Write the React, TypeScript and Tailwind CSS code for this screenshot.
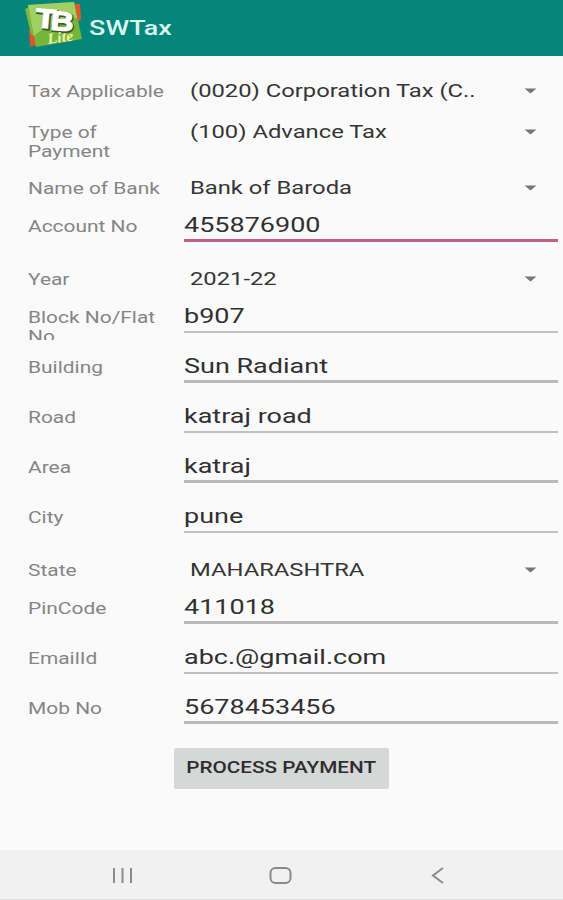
type LineStyle = "accent" | "thick" | "thin"

interface FieldRow {
  label: string
  value: string
  kind: "select" | "input"
  height: string
  line?: LineStyle
  clipLabel?: boolean
}

const rows: FieldRow[] = [
  { label: "Tax Applicable", value: "(0020) Corporation Tax (C..", kind: "select", height: "h-[41px]" },
  { label: "Type of Payment", value: "(100) Advance Tax", kind: "select", height: "h-14" },
  { label: "Name of Bank", value: "Bank of Baroda", kind: "select", height: "h-[38px]" },
  { label: "Account No", value: "455876900", kind: "input", height: "h-[53px]", line: "accent" },
  { label: "Year", value: "2021-22", kind: "select", height: "h-[38px]" },
  { label: "Block No/Flat No", value: "b907", kind: "input", height: "h-[50px]", line: "thin", clipLabel: true },
  { label: "Building", value: "Sun Radiant", kind: "input", height: "h-[50px]", line: "thick" },
  { label: "Road", value: "katraj road", kind: "input", height: "h-[50px]", line: "thin" },
  { label: "Area", value: "katraj", kind: "input", height: "h-[50px]", line: "thick" },
  { label: "City", value: "pune", kind: "input", height: "h-[53px]", line: "thin" },
  { label: "State", value: "MAHARASHTRA", kind: "select", height: "h-[38px]" },
  { label: "PinCode", value: "411018", kind: "input", height: "h-[50px]", line: "thick" },
  { label: "EmailId", value: "abc.@gmail.com", kind: "input", height: "h-[50px]", line: "thin" },
  { label: "Mob No", value: "5678453456", kind: "input", height: "h-[50px]", line: "thick" },
]

const lineClasses: Record<LineStyle, string> = {
  accent: "h-[3px] bg-[#c65f8a]",
  thick: "h-[3px] bg-[#bababa]",
  thin: "mt-px h-[2px] bg-[#c0c0c0]",
}

function Logo() {
  return (
    <svg width="60" height="50" viewBox="0 0 60 50" className="shrink-0">
      <path d="M45 4 L56 4 L57 19 L50 26Z" fill="#df5a2b" />
      <path d="M5 30 L18 28 L20 45 L6 46Z" fill="#e2522b" />
      <path d="M1 9 L10 5 L14 40 L7 34Z" fill="#77b843" />
      <path d="M4 5 L50 2 L58 39 L12 47Z" fill="#74b53a" />
      <path d="M4 5 L50 2 L53 18 Q28 20 10 36Z" fill="#a0cf62" />
      <g fontFamily="Liberation Sans, sans-serif" fontWeight="700" fontSize="27" transform="rotate(5 10 28)">
        <text x="12" y="28" fill="#3d5a2a" stroke="#3d5a2a" strokeWidth="2.500" textLength="20" lengthAdjust="spacingAndGlyphs">T</text>
        <text x="27" y="29" fill="#3d5a2a" stroke="#3d5a2a" strokeWidth="2.500" textLength="23" lengthAdjust="spacingAndGlyphs">B</text>
        <text x="11" y="27" fill="#fff" stroke="#fff" strokeWidth="1.200" textLength="20" lengthAdjust="spacingAndGlyphs">T</text>
        <text x="26" y="28" fill="#fff" stroke="#fff" strokeWidth="1.200" textLength="23" lengthAdjust="spacingAndGlyphs">B</text>
      </g>
      <text x="24" y="44" fontFamily="Liberation Serif, serif" fontSize="15" fontStyle="italic" fontWeight="700" fill="#e9f3a8" transform="rotate(-8 24 44)" textLength="26" lengthAdjust="spacingAndGlyphs">Lite</text>
    </svg>
  )
}

function SelectField({ value }: { value: string }) {
  return (
    <div className="flex w-[374px] items-start justify-between pl-1.5 pr-[21px]">
      <span className="h-7 origin-left scale-x-[1.285] whitespace-nowrap text-[18.5px] leading-[30px] text-[#353535]">{value}</span>
      <svg width="13" height="6" viewBox="0 0 13 6" className="mt-3 shrink-0">
        <path d="M0.5 0.5 H12.5 L6.5 5.5Z" fill="#777" />
      </svg>
    </div>
  )
}

function InputField({ value, line = "thin" }: { value: string; line?: LineStyle }) {
  return (
    <div className="flex w-[374px] flex-col">
      <span className="h-7 w-[290px] origin-left scale-x-[1.285] whitespace-nowrap text-[21px] leading-[29px] text-[#303030]">{value}</span>
      <div className={lineClasses[line]} />
    </div>
  )
}

function FormRow({ row }: { row: FieldRow }) {
  return (
    <div className={`flex ${row.height}`}>
      <div className={`h-[38px] w-[156px] shrink-0 pt-1.5 ${row.clipLabel ? "overflow-hidden" : ""}`}>
        <div className="w-[112px] origin-left scale-x-[1.285] text-[16.3px] leading-[19px] text-[#858585]">{row.label}</div>
      </div>
      {row.kind === "select" ? <SelectField value={row.value} /> : <InputField value={row.value} line={row.line} />}
    </div>
  )
}

export default function App() {
  return (
    <div className="flex h-[900px] w-[563px] flex-col overflow-hidden bg-[#fafafa] font-[Roboto,sans-serif]">
      <header className="flex h-14 shrink-0 items-start bg-[#05867a] pl-6">
        <Logo />
        <h1 className="origin-left scale-x-[1.28] pl-1 pt-[13px] text-[21px] font-medium text-[#d9f5f0]">SWTax</h1>
      </header>

      <main className="flex grow flex-col pl-7 pt-5">
        {rows.map((row) => (
          <FormRow key={row.label} row={row} />
        ))}
        <button className="ml-[146px] mt-[5px] flex h-[41px] w-[215px] items-center justify-center rounded-[2px] bg-[#d6d8d7]">
          <span className="scale-x-[1.28] whitespace-nowrap text-[16.2px] font-medium text-[#2d2d2d]">PROCESS PAYMENT</span>
        </button>
      </main>

      <nav className="flex h-[50px] shrink-0 items-center border-b border-[#dcdcdc] bg-[#f1f1f1]">
        <svg width="563" height="50" viewBox="0 0 563 50" fill="none" stroke="#8a8a8a" strokeWidth="2">
          <path d="M114 18V33M122.500 18V33M131 18V33" />
          <rect x="270.500" y="18" width="20" height="15" rx="5" />
          <path d="M443 18L433 25.500L443 33" />
        </svg>
      </nav>
    </div>
  )
}
